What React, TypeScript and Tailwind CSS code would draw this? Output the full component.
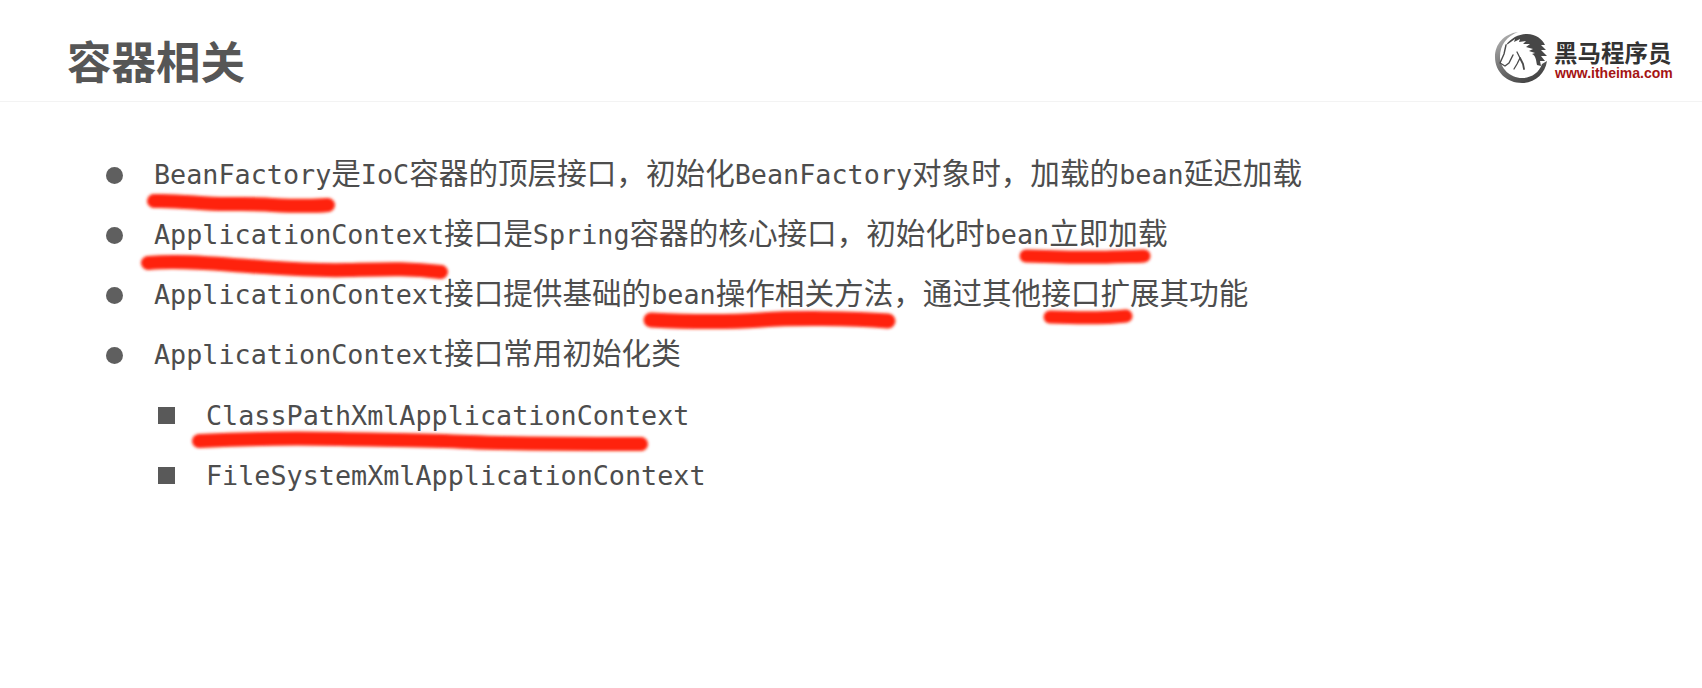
import type { ReactNode } from 'react';

const cjk = '"Noto Sans CJK SC", sans-serif';

function M({ children }: { children: ReactNode }) {
  return <span className="font-['DejaVu_Sans_Mono',monospace] text-[26.78px]">{children}</span>;
}

function Line({ children }: { children: ReactNode }) {
  return (
    <li className="flex h-[60px] items-center">
      <span className="size-[17px] rounded-full bg-[#5f5f5f] mr-[31px]" />
      <span className="whitespace-nowrap -mt-[4px]">{children}</span>
    </li>
  );
}

function SubLine({ children }: { children: ReactNode }) {
  return (
    <li className="flex h-[60px] items-center">
      <span className="size-[17px] bg-[#595959] mr-[31px]" />
      <span className="whitespace-nowrap -mt-[2px]">{children}</span>
    </li>
  );
}

function HorseLogo() {
  return (
    <svg width="58" height="56" viewBox="5 3 58 56" className="shrink-0">
      <defs>
        <linearGradient id="ring" x1="0" y1="0" x2="0.6" y2="1">
          <stop offset="0" stopColor="#bdbdbd" />
          <stop offset="0.5" stopColor="#7a7a7a" />
          <stop offset="1" stopColor="#454545" />
        </linearGradient>
      </defs>
      {/* outer swoosh, thin at the top and thick along the bottom */}
      <path d="M31 6C17 8 8 18 8 31c0 15 12 26 27 26 13 0 23-9 25-22l-5 3c-3 9-11 14-20 14-12 0-22-10-22-21 0-12 7-21 18-25z" fill="url(#ring)" />
      {/* head and mane */}
      <path d="M19 19C24 12 32 8 40 8c9 0 15 5 18 11l-4 0 5 5-5 0 6 6-6 0 4 5-5 0 1 5-4-1c-1-5-1-9-5-11l3-1-6-2 4-2-7-2 4-3-7 0 3-3-7 1 1-3-6 3 1-3-7 5z" fill="#474747" />
      <g fill="none" stroke="#4a4a4a" strokeLinecap="round" strokeLinejoin="round">
        <path d="M19 19l-2 9-4 9 5 3 4-3 4-8" strokeWidth="1.4" />
        <path d="M30 26l3 6-3 6-3 5" strokeWidth="1.3" />
        <path d="M33 32l3 6 1 5" strokeWidth="1.8" />
      </g>
    </svg>
  );
}

export default function App() {
  return (
    <div className="relative h-[688px] w-[1702px] overflow-hidden bg-white text-[#4d4d4d]" style={{ fontFamily: cjk }}>
      <header className="flex h-[102px] items-center justify-between border-b border-[#f3f3f3] pl-[67px] pr-[30px]">
        <h1 className="text-[44.5px] font-bold leading-none text-[#565656] mt-[20px]">容器相关</h1>
        <div className="flex items-center gap-[4px] mt-[13px]">
          <HorseLogo />
          <div className="flex flex-col w-[118px] mt-[6px]">
            <span className="text-[23.5px] font-bold leading-[26px] text-[#333] whitespace-nowrap">黑马程序员</span>
            <span className="font-['Liberation_Sans',sans-serif] text-[14px] font-bold leading-[16px] text-[#a51414] whitespace-nowrap ml-[1px]">www.itheima.com</span>
          </div>
        </div>
      </header>

      <ul className="pl-[106px] pt-[43px] text-[29.6px] leading-[40px]">
        <Line><M>BeanFactory</M>是<M>IoC</M>容器的顶层接口，初始化<M>BeanFactory</M>对象时，加载的<M>bean</M>延迟加载</Line>
        <Line><M>ApplicationContext</M>接口是<M>Spring</M>容器的核心接口，初始化时<M>bean</M>立即加载</Line>
        <Line><M>ApplicationContext</M>接口提供基础的<M>bean</M>操作相关方法，通过其他接口扩展其功能</Line>
        <Line><M>ApplicationContext</M>接口常用初始化类</Line>
        <ul className="pl-[52px]">
          <SubLine><M>ClassPathXmlApplicationContext</M></SubLine>
          <SubLine><M>FileSystemXmlApplicationContext</M></SubLine>
        </ul>
      </ul>

      {/* hand-drawn red marks over the slide */}
      <svg width="1702" height="688" className="pointer-events-none absolute inset-0">
        <defs>
          <filter id="soft"><feGaussianBlur stdDeviation="1.5" /></filter>
        </defs>
        <g fill="none" stroke="#ff2008" strokeWidth="14" strokeLinecap="round" strokeLinejoin="round" filter="url(#soft)">
          <path d="M154 201c30-1 50 4 80 3s60 4 94 1" />
          <path d="M148 263c35-3 70 1 100 3s60 5 100 4 60-2 93 2" />
          <path d="M1026 256c30 1 60 2 85 1s20 0 33-1" strokeWidth="13" />
          <path d="M651 320c40 2 80 2 110 0s90-2 127 1" strokeWidth="15" />
          <path d="M1050 317c25 1 50 2 76-1" strokeWidth="13" />
          <path d="M199 441c40-2 90-3 140-2s90 1 130 3 90 2 172 2" />
        </g>
      </svg>
    </div>
  );
}
